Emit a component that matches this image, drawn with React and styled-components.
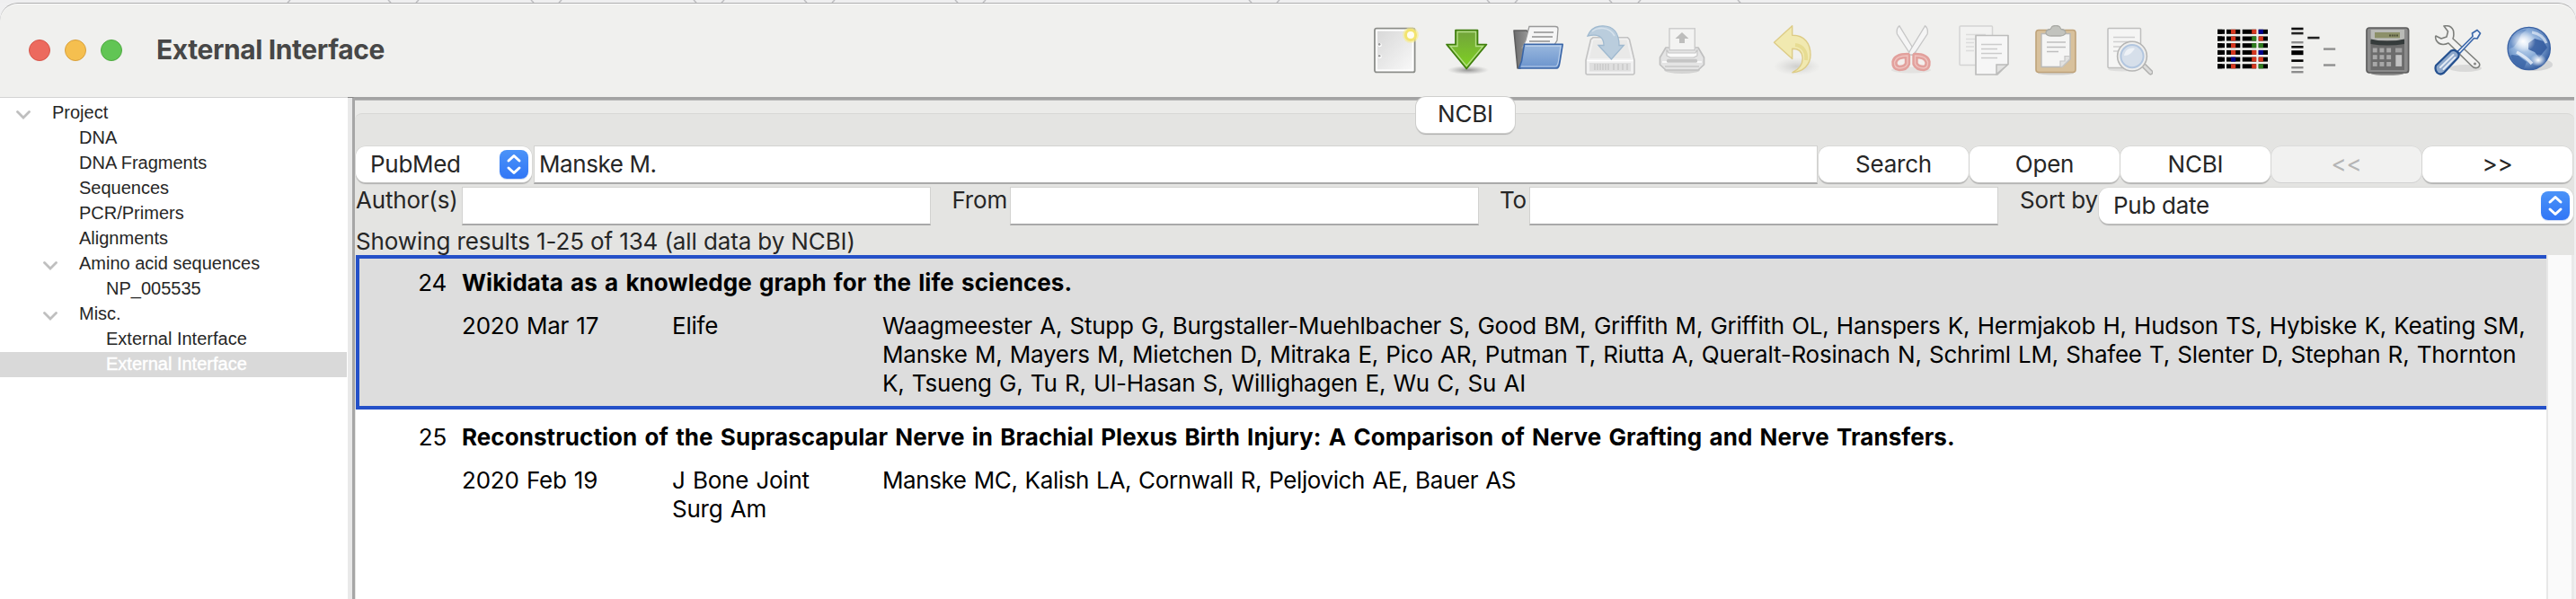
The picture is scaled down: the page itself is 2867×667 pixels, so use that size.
import React from 'react';
import styled, { createGlobalStyle, css } from 'styled-components';

const Global = createGlobalStyle`
  body { margin: 0; background: #f0f0f1; overflow: hidden; }
  * { box-sizing: border-box; }
  #root { font-family: Inter, "Liberation Sans", sans-serif; font-size: 26px; color: #262626; }
`;

/* ---------- window frame ---------- */

const Window = styled.div`
  display: flex;
  flex-direction: column;
  width: 2867px;
  height: 667px;
`;

const Backdrop = styled.svg`
  display: block;
  flex: none;
  width: 2867px;
  height: 3px;
  background: #efeff0;
`;

const TitleBar = styled.header`
  display: flex;
  align-items: center;
  flex: none;
  height: 105px;
  padding: 0 23px 0 32px;
  background: #f0f0ee;
  border-top: 1px solid #adadad;
  border-radius: 20px 20px 0 0;
  box-shadow: inset 0 1px 0 #fafafa;
`;

const Lights = styled.div`
  display: flex;
  gap: 16px;
`;

const Light = styled.span`
  width: 24px;
  height: 24px;
  border-radius: 50%;
  background: ${(p) => p.$fill};
  border: 1px solid ${(p) => p.$rim};
`;

const Title = styled.h1`
  margin: 0 auto 2px 38px;
  font-size: 30px;
  font-weight: 700;
  letter-spacing: -0.4px;
  color: #474747;
`;

const Toolbar = styled.div`
  display: flex;
  gap: 24px;
`;

const Spacer = styled.span`
  width: ${(p) => p.$w}px;
`;

const Icon = styled.svg`
  display: block;
  width: 56px;
  height: 56px;
`;

const Body = styled.div`
  display: flex;
  flex: 1;
  min-height: 0;
`;

/* ---------- project tree ---------- */

const Sidebar = styled.nav`
  flex: none;
  width: 387px;
  padding-top: 3px;
  background: #fff;
  border-top: 1px solid #d4d4d4;
  font-family: "Liberation Sans", Arial, sans-serif;
  font-size: 20px;
`;

const TreeRow = styled.div`
  display: flex;
  align-items: center;
  width: 386px;
  height: 28px;
  padding: 0 0 1px ${(p) => 18 + p.$level * 30}px;
  color: #262626;
  ${(p) => p.$selected && css`
    background: #d9d9d9;
    color: #fff;
    -webkit-text-stroke: 0.4px #fff;
  `}
`;

const Twisty = styled.svg`
  width: 16px;
  height: 10px;
  margin: 5px 24px 0 0;
  visibility: ${(p) => (p.$shown ? 'visible' : 'hidden')};
`;

const Splitter = styled.div`
  flex: none;
  width: 8px;
  background: #e9e9e9;
  border-right: 3px solid #a6a6a6;
  border-top: 1px solid #858585;
`;

/* ---------- main panel ---------- */

const Panel = styled.main`
  display: flex;
  flex-direction: column;
  flex: 1;
  background: #ebebe9;
  border-top: 3px solid #a3a3a3;
  box-shadow: inset 0 1px 0 #b8b8b8;
  margin-right: 2px;
`;

const TabBar = styled.div`
  display: flex;
  justify-content: center;
  flex: none;
  height: 15px;
`;

const Tab = styled.button`
  position: relative;
  z-index: 1;
  flex: none;
  width: 110px;
  height: 40px;
  margin: -3px 0 0 2px;
  padding: 0 0 3px;
  border: 0;
  border-radius: 11px;
  background: #fff;
  font: inherit;
  letter-spacing: -0.2px;
  color: #262626;
  box-shadow: 0 0 0 1px #cfcfcd, 0 2px 1px #b0b0b0;
`;

const Group = styled.section`
  display: flex;
  flex-direction: column;
  flex: 1;
  min-height: 0;
  padding-top: 35px;
  border-top: 1px solid #d8d8d6;
  border-radius: 8px 8px 0 0;
  background: #e4e4e2;
  letter-spacing: -0.2px;
`;

const SearchRow = styled.div`
  display: flex;
  align-items: flex-start;
  height: 46px;
  padding: 0 1px;
`;

const FilterRow = styled.div`
  display: flex;
  align-items: flex-start;
  height: 44px;
  padding: 0 1px 0 1px;
`;

const Select = styled.div`
  display: flex;
  align-items: center;
  justify-content: space-between;
  width: ${(p) => p.$w}px;
  height: 40px;
  margin-top: 1px;
  padding: 0 4px 0 16px;
  border-radius: 11px;
  background: #fff;
  box-shadow: 0 0 0 0.5px #d0d0ce, 0 1.5px 1px #b0b0b0;
  letter-spacing: -0.3px;
`;

const SelectText = styled.span`
  padding-bottom: 2px;
`;

const Stepper = styled.svg`
  display: block;
  width: 32px;
  height: 32px;
  border-radius: 8px;
  background: linear-gradient(#4b93f8, #3176f6);
  box-shadow: 0 1px 1px rgba(40, 90, 200, 0.25);
`;

const Field = styled.div`
  display: flex;
  align-items: center;
  width: ${(p) => p.$w}px;
  height: 43px;
  padding: 0 0 1px 5px;
  background: #fff;
  border: 1px solid #d2d2d0;
  border-bottom: 2px solid #a9a9a9;
  letter-spacing: -0.4px;
  ${(p) => p.$ml && css`margin-left: ${p.$ml}px;`}
`;

const Button = styled.button`
  width: 167px;
  height: 40px;
  margin: 1px 1px 0 0;
  padding: 0 0 2px;
  border: 0;
  border-radius: 11px;
  background: ${(p) => (p.disabled ? '#f1f1f0' : '#fff')};
  color: ${(p) => (p.disabled ? '#b5b5b5' : '#262626')};
  font: inherit;
  letter-spacing: inherit;
  box-shadow: ${(p) => (p.disabled ? '0 0 0 0.5px #d4d4d4, 0 1px 0 #cfcfcf' : '0 0 0 0.5px #d0d0ce, 0 1.5px 1px #b0b0b0')};
`;

const Label = styled.span`
  width: ${(p) => p.$w}px;
  height: 30px;
  line-height: 30px;
  padding-right: 1px;
  white-space: nowrap;
  text-align: ${(p) => (p.$right ? 'right' : 'left')};
`;

const Status = styled.div`
  flex: none;
  height: 32px;
  padding: 1px 0 0 1px;
  line-height: 32px;
  letter-spacing: -0.12px;
`;

/* ---------- results ---------- */

const ResultArea = styled.div`
  display: flex;
  flex: 1;
  min-height: 0;
  padding-left: 1px;
`;

const ResultList = styled.div`
  flex: 1;
  background: #fff;
  color: #000;
  line-height: 32px;
`;

const Result = styled.article`
  display: grid;
  grid-template-columns: 97px 234px 234px 1fr;
  grid-template-rows: 32px auto;
  row-gap: 16px;
  align-content: start;
  height: 172px;
  padding-top: 11px;
  border: 4px solid ${(p) => (p.$selected ? '#2450c8' : 'transparent')};
  border-right: 0;
  background: ${(p) => (p.$selected ? '#dddddd' : '#fff')};
`;

const Num = styled.span`
  text-align: right;
`;

const Head = styled.h2`
  grid-column: 2 / -1;
  margin: 0;
  padding-left: 17px;
  font-size: 26px;
  font-weight: 700;
  letter-spacing: 0.06px;
  word-spacing: 2px;
  white-space: nowrap;
`;

const Cell = styled.div`
  padding-left: 17px;
  letter-spacing: ${(p) => (p.$tight ? '-0.4px' : '-0.23px')};
  word-spacing: 1.2px;
  white-space: pre;
  ${(p) => p.$first && css`grid-column: 2;`}
`;

const ScrollTrack = styled.div`
  flex: none;
  width: 31px;
  background: #fafafa;
  border-left: 2px solid #e8e8e8;
  border-right: 3px solid #e9e9e9;
`;

/* ---------- toolbar icons ---------- */

const NewIcon = () => (
  <Icon viewBox="0 0 56 56">
    <defs><linearGradient id="pg" x1="0" y1="0" x2="1" y2="1"><stop offset="0" stopColor="#d8d8d8" /><stop offset="1" stopColor="#f8f8f8" /></linearGradient></defs>
    <rect x="6" y="3.6" width="44.6" height="48.8" rx="2" fill="#fff" stroke="#8b8d89" strokeWidth="1.8" />
    <rect x="9" y="6.6" width="38.6" height="42.8" fill="url(#pg)" />
    <circle cx="11.6" cy="22" r="2.2" fill="#fff" /><circle cx="11.2" cy="21.4" r="1.3" fill="#9a9a9a" />
    <circle cx="11.6" cy="34.8" r="2.2" fill="#fff" /><circle cx="11.2" cy="34.2" r="1.3" fill="#9a9a9a" />
    <circle cx="46" cy="11" r="8.8" fill="#f6ec8d" opacity=".6" />
    <circle cx="46" cy="11" r="5.5" fill="#fffdf0" stroke="#f3e46f" strokeWidth="3" />
  </Icon>
);

const ImportIcon = () => (
  <Icon viewBox="0 0 56 56">
    <defs>
      <linearGradient id="ga" x1="0" y1="0" x2="0" y2="1"><stop offset="0" stopColor="#72a23c" /><stop offset="1" stopColor="#7fd321" /></linearGradient>
      <radialGradient id="gs"><stop offset="0" stopColor="#555" stopOpacity=".6" /><stop offset="1" stopColor="#777" stopOpacity="0" /></radialGradient>
    </defs>
    <ellipse cx="30" cy="50" rx="23" ry="5" fill="url(#gs)" />
    <path d="M16 5.5H40.5V21.5H50.5L28.2 48.5L6 21.5H16Z" fill="url(#ga)" stroke="#3f7d0e" strokeWidth="1.7" strokeLinejoin="round" />
    <path d="M18 7.5H38.5V23.5H46.5L28.2 45.5L10 23.5H18Z" fill="none" stroke="#b4dd86" strokeWidth="1.3" />
  </Icon>
);

const OpenIcon = () => (
  <Icon viewBox="0 0 56 56">
    <defs>
      <linearGradient id="fb" x1="0" y1="0" x2="0" y2="1"><stop offset="0" stopColor="#9ab8de" /><stop offset="1" stopColor="#6b94cd" /></linearGradient>
      <linearGradient id="fg" x1="0" y1="0" x2="1" y2="0"><stop offset="0" stopColor="#6c6c6c" /><stop offset="1" stopColor="#bbb" /></linearGradient>
    </defs>
    <path d="M1 6H15L18 9H30V30L8 48H5Z" fill="url(#fg)" stroke="#5d5d5d" strokeWidth="1.6" strokeLinejoin="round" />
    <path d="M18 1.5H47Q50 1.5 50 4L49 17L44 25H10L14 17Z" fill="#f5f5f5" stroke="#999" strokeWidth="1.3" />
    <path d="M23 8H45M21 13H44M18 18H41" stroke="#a9a9a9" strokeWidth="2" />
    <path d="M12.5 21.3H55.2L52 41Q51 48 48.5 48H6.5L9.5 40Z" fill="url(#fb)" stroke="#3a66a8" strokeWidth="1.6" strokeLinejoin="round" />
    <path d="M14 23.4H53L50.5 40Q49.5 46 47 46H9" fill="none" stroke="#b9cee9" strokeWidth="1.2" />
  </Icon>
);

const SaveIcon = () => (
  <Icon viewBox="0 0 56 56">
    <path d="M9 13.8H47.5L49.5 16L55 39V53Q55 55 53 55H3Q1 55 1 53V39L6.5 16Z" fill="#f1f1f1" stroke="#c2c2c2" strokeWidth="1.6" />
    <path d="M9.5 16.5H46.5L51 37H5Z" fill="#e9e9e8" />
    <path d="M2.5 39.5H53.5" stroke="#fff" strokeWidth="1.6" />
    <rect x="5" y="42" width="46" height="9.5" fill="#dfdfdf" />
    <path d="M11 43V50M14 43V50M17 43V50M20 43V50M23 43V50M26 43V50M32 43V50M37 43V50M42 43V50M47 43V50" stroke="#c7c7c7" strokeWidth="1.3" />
    <path d="M3 12C6 4 12 .8 20 .8C32 .8 38 9 38 22.5H43.3L29.4 38L15 22.5H21C21 14 16 9 3 12Z" fill="#bacddd" stroke="#9fb9cf" strokeWidth="1.3" />
    <path d="M8 7C14 2 27 1 33 12" fill="none" stroke="#d6e2ec" strokeWidth="1.6" />
  </Icon>
);

const PrintIcon = () => (
  <Icon viewBox="0 0 56 56">
    <ellipse cx="28" cy="50" rx="20" ry="4" fill="#d4d4d3" />
    <path d="M10 25H46L52.5 36V44L46 50H10L3.5 44V36Z" fill="#e4e4e4" stroke="#c0c0c0" strokeWidth="1.7" strokeLinejoin="round" />
    <rect x="14" y="3.8" width="28.3" height="24" fill="#f3f3f2" stroke="#cbcbcb" strokeWidth="1.4" />
    <path d="M28 8L35.5 15H31V20H25V15H20.5Z" fill="#bdbdbc" />
    <path d="M13 31H43L45 27V34L41 36H15L11 34V27Z" fill="#fafafa" stroke="#c6c6c6" strokeWidth="1.2" />
    <path d="M6 41H50" stroke="#f8f8f8" strokeWidth="2" />
    <rect x="11" y="37.8" width="34" height="4" rx="1.5" fill="#c5c5c5" />
    <path d="M9 46H47" stroke="#c9c9c9" strokeWidth="1.4" />
  </Icon>
);

const UndoIcon = () => (
  <Icon viewBox="0 0 56 56">
    <defs><radialGradient id="us"><stop offset="0" stopColor="#777" stopOpacity=".28" /><stop offset="1" stopColor="#999" stopOpacity="0" /></radialGradient></defs>
    <ellipse cx="28" cy="46" rx="26" ry="10" fill="url(#us)" />
    <path d="M2.5 19.3L22.7 .8V11.3C36 11 43 20 43 33C43 44 35 52 23 52.7C32 48 35 42 34 35C33 28 29 26 22.7 26.2V37.5Z" fill="#f1e9b0" stroke="#ddcc86" strokeWidth="1.4" strokeLinejoin="round" />
    <path d="M26 22C35 23 39 30 38 39" fill="none" stroke="#e7dc92" strokeWidth="4" />
  </Icon>
);

const CutIcon = () => (
  <Icon viewBox="0 0 56 56">
    <ellipse cx="27" cy="50" rx="22" ry="3.5" fill="#e3e2e0" />
    <path d="M14 .8L30.5 28L33 33L27.5 33L24 29L11.5 10Q10 4 14 .8Z" fill="#f5f5f5" stroke="#c6c6c6" strokeWidth="1.3" />
    <path d="M42.5 .8L26 28L23.5 33L29 33L32.5 29L45 10Q46.5 4 42.5 .8Z" fill="#f5f5f5" stroke="#c6c6c6" strokeWidth="1.3" />
    <path d="M23 34V43Q21 48 14 48Q8 47.5 8.5 41Q10 34 23 34Z" fill="#f3eeec" stroke="#e2a09c" strokeWidth="6.4" strokeLinejoin="round" />
    <path d="M31.5 34V43Q34 48 41 48Q46 47.5 45.500 41Q44 34 31.5 34Z" fill="#f3eeec" stroke="#e2a09c" strokeWidth="6.4" strokeLinejoin="round" />
    <path d="M23 34V43Q21 48 14 48Q8 47.5 8.5 41Q10 34 23 34ZM31.5 34V43Q34 48 41 48Q46 47.5 45.5 41Q44 34 31.5 34Z" fill="none" stroke="#efc3bf" strokeWidth="1.4" />
  </Icon>
);

const CopyIcon = () => (
  <Icon viewBox="0 0 56 56">
    <rect x="1" y="1" width="36.5" height="43.5" rx="1" fill="#f2f2f1" stroke="#d4d4d3" strokeWidth="1.5" />
    <path d="M8 10.5H30M8 15.5H28M8 19.5H17M8 24H17M8 28.5H17" stroke="#dcdcdc" strokeWidth="1.3" />
    <path d="M19 11.5H55V43L43 55H19Z" fill="#f6f6f6" stroke="#bcbcbb" strokeWidth="1.7" strokeLinejoin="round" />
    <path d="M42 54.5V44H54.5Z" fill="#e2e2e1" stroke="#bcbcbb" strokeWidth="1.5" />
    <path d="M25 21.5H48M25 26.5H43M25 31.5H48M25 36.5H43" stroke="#cbcbcb" strokeWidth="1.5" />
  </Icon>
);

const PasteIcon = () => (
  <Icon viewBox="0 0 56 56">
    <ellipse cx="28" cy="53.5" rx="20" ry="2" fill="#d2d1cf" />
    <rect x="6" y="5.5" width="44" height="47" rx="3" fill="#d8c19c" stroke="#bfa37a" strokeWidth="1.6" />
    <path d="M12 9.5H44V38L35 46.5H12Z" fill="#f5f5f4" stroke="#b9b9b7" strokeWidth="1.4" />
    <path d="M33 46V40H38V34.5H43.5V38L35 46.5Z" fill="#e2e2e1" stroke="#c6c6c5" strokeWidth="1.2" />
    <path d="M18 19H39M18 24.5H39M18 29.5H31" stroke="#bebebe" strokeWidth="1.5" />
    <path d="M17 9Q17 5 22 4.5L24 1.5Q28 -.5 32 1.5L34 4.5Q39 5 39 9Q37 12 33 12H23Q18 12 17 9Z" fill="#c2c3be" stroke="#aaaba6" strokeWidth="1.3" />
  </Icon>
);

const FindIcon = () => (
  <Icon viewBox="0 0 56 56">
    <ellipse cx="22" cy="49" rx="16" ry="2.5" fill="#dededd" />
    <rect x="6" y="3.6" width="36.5" height="44" rx="1" fill="#f5f5f4" stroke="#bfbfbe" strokeWidth="1.5" />
    <path d="M12 13.5H36M12 18.5H32M12 24H22M12 29H18" stroke="#d0d0d0" strokeWidth="1.4" />
    <path d="M45 44L53.5 52.5" stroke="#b0b0af" strokeWidth="6" strokeLinecap="round" />
    <path d="M45 44L53.5 52.5" stroke="#dcdcdb" strokeWidth="3" strokeLinecap="round" />
    <circle cx="33" cy="34.6" r="16.4" fill="#eeeeed" stroke="#b5b5b4" strokeWidth="1.6" />
    <circle cx="33" cy="34.6" r="12.6" fill="#d6dfea" stroke="#b2c6df" strokeWidth="2" />
    <path d="M24 34C25 27 31 24.5 36 26C33 31 29 34 24 34Z" fill="#eef2f7" />
  </Icon>
);

const PALETTE = { k: '#000', r: '#d5371f', g: '#2f7d1f', b: '#00008a' };
const GRID_COLS = [
  { x: 0, w: 8, mark: 0, codes: 'kkkkkk' },
  { x: 10, w: 15.3, mark: 15, codes: 'rrrrbr' },
  { x: 27.7, w: 15.3, mark: 38.2, codes: 'rggrrr' },
  { x: 45.7, w: 10.3, mark: 45.7, codes: 'brgbrg' },
];

const GridIcon = () => (
  <Icon viewBox="0 0 56 56">
    {[0, 1, 2, 3, 4, 5].map((row) => GRID_COLS.map((col) => (
      <g key={`${row}-${col.x}`}>
        <rect x={col.x} y={4.8 + row * 7.7} width={col.w} height="5" fill="#000" />
        <rect x={col.mark} y={4.8 + row * 7.7} width="5.2" height="5" fill={PALETTE[col.codes[row]]} />
      </g>
    )))}
  </Icon>
);

const BANDS = [
  [2.3, 2.7, 2.6, '#111'], [2.3, 7.8, 2.6, '#222'], [2.3, 18, 2.4, '#8c8c8c'],
  [2.3, 23, 2.6, '#111'], [2.3, 28.2, 5, '#000'], [2.3, 38.3, 2.6, '#000'],
  [2.3, 46, 2.4, '#8c8c8c'], [2.3, 51, 2.4, '#8c8c8c'], [20.3, 12.8, 2.6, '#222'],
  [38, 25.4, 2.4, '#8f8f8f'], [38, 43.3, 2.4, '#8f8f8f'],
];

const GelIcon = () => (
  <Icon viewBox="0 0 56 56">
    {BANDS.map(([x, y, h, fill]) => <rect key={`${x}-${y}`} x={x} y={y} width="13.2" height={h} fill={fill} />)}
  </Icon>
);

const CalcIcon = () => (
  <Icon viewBox="0 0 56 56">
    <ellipse cx="29" cy="54" rx="18" ry="2" fill="#8f8f8e" />
    <rect x="6" y="3" width="46.6" height="50" rx="3" fill="#8b8b8b" stroke="#5c5c5c" strokeWidth="1.7" />
    <rect x="10.5" y="5" width="37.5" height="45" fill="#6c6c6c" />
    <rect x="10.5" y="5" width="37.5" height="12" fill="#b9bab6" />
    <rect x="15" y="8" width="28" height="6.3" fill="#8c9068" />
    <path d="M31 11.5H41" stroke="#50533b" strokeWidth="2" strokeDasharray="2 .7" />
    <path d="M10.5 15.5Q29 20 48 15.5V21Q29 24 10.5 21Z" fill="#353b3b" />
    {[25.5, 33.2, 41].map((y) => [12.8, 20.5, 28.2].map((x) => (
      <rect key={`${x}-${y}`} x={x} y={y} width="4.9" height="4.9" fill="#a8a8a8" />
    )))}
    <rect x="38" y="25.5" width="7.3" height="4.9" fill="#a0a0a0" />
    <rect x="38.3" y="33.2" width="6.8" height="12.7" fill="#c2c2c2" />
  </Icon>
);

const ToolsIcon = () => (
  <Icon viewBox="0 0 56 56">
    <ellipse cx="36" cy="48" rx="18" ry="4" fill="#d9d9d8" />
    <path d="M12 1Q20 -.5 22.5 6Q23.5 12 22 15L49 40Q54 44 50 47Q46 49 42.5 45L17 20Q8 24 3.5 17Q2 13 3 12L9 15L15 13L16.5 7Z" fill="#f2f2f1" stroke="#7d7f7b" strokeWidth="1.6" strokeLinejoin="round" />
    <circle cx="46.5" cy="43" r="1.6" fill="#8a8a88" />
    <path d="M27 29.5L44 12.5L43.5 9L49 5.5L52.5 9L49 15L45.5 14.5L29.5 31.5Z" fill="#eef2f8" stroke="#3b68ab" strokeWidth="1.7" strokeLinejoin="round" />
    <path d="M20 28.5Q25 26.5 28.5 32Q29 36 27 37L12 53Q8 56 4.5 53Q1.5 50 3 45Z" fill="#8fa9cb" stroke="#24508f" strokeWidth="2.2" strokeLinejoin="round" />
    <path d="M8 47L22.5 33M11.5 49L24.5 36" stroke="#e3eaf4" strokeWidth="2" strokeLinecap="round" />
  </Icon>
);

const GlobeIcon = () => (
  <Icon viewBox="0 0 56 56">
    <defs>
      <radialGradient id="gl" cx=".42" cy=".4" r=".65"><stop offset="0" stopColor="#cfe0f3" /><stop offset=".55" stopColor="#83a7d5" /><stop offset="1" stopColor="#31599c" /></radialGradient>
      <radialGradient id="gh"><stop offset="0" stopColor="#fff" /><stop offset="1" stopColor="#fff" stopOpacity="0" /></radialGradient>
    </defs>
    <ellipse cx="32" cy="44" rx="21" ry="7" fill="#d4d5d6" />
    <circle cx="26.7" cy="26" r="23.6" fill="url(#gl)" stroke="#3a62a4" strokeWidth="1.4" />
    <path d="M5 18C9 9 17 4 24 5L18 10L15 17L10 24L4 27Z" fill="#5f88c2" opacity=".7" />
    <path d="M26 20L33 15L43 18L47 25L42 31L38 36L33 30L26 27Z" fill="#31599d" opacity=".85" />
    <path d="M8 33L15 34L24 41L21 48C13 46 8 40 6 34Z" fill="#3c66a8" opacity=".85" />
    <ellipse cx="20" cy="18" rx="14" ry="12" fill="url(#gh)" />
    <ellipse cx="37" cy="39" rx="9" ry="7" fill="url(#gh)" />
    <path d="M13 30Q24 36 30 43" fill="none" stroke="#edf3fa" strokeWidth="3.5" opacity=".8" />
    <path d="M30 8Q42 10 46 20" fill="none" stroke="#e2ebf6" strokeWidth="3" opacity=".7" />
  </Icon>
);

/* ---------- data ---------- */

const TREE = [
  { label: 'Project', level: 0, open: true },
  { label: 'DNA', level: 1 },
  { label: 'DNA Fragments', level: 1 },
  { label: 'Sequences', level: 1 },
  { label: 'PCR/Primers', level: 1 },
  { label: 'Alignments', level: 1 },
  { label: 'Amino acid sequences', level: 1, open: true },
  { label: 'NP_005535', level: 2 },
  { label: 'Misc.', level: 1, open: true },
  { label: 'External Interface', level: 2 },
  { label: 'External Interface', level: 2, selected: true },
];

const RESULTS = [
  {
    num: 24,
    title: 'Wikidata as a knowledge graph for the life sciences.',
    date: '2020 Mar 17',
    journal: 'Elife',
    authors:
      'Waagmeester A, Stupp G, Burgstaller-Muehlbacher S, Good BM, Griffith M, Griffith OL, Hanspers K, Hermjakob H, Hudson TS, Hybiske K, Keating SM,\n' +
      'Manske M, Mayers M, Mietchen D, Mitraka E, Pico AR, Putman T, Riutta A, Queralt-Rosinach N, Schriml LM, Shafee T, Slenter D, Stephan R, Thornton\n' +
      'K, Tsueng G, Tu R, Ul-Hasan S, Willighagen E, Wu C, Su AI',
    selected: true,
  },
  {
    num: 25,
    title: 'Reconstruction of the Suprascapular Nerve in Brachial Plexus Birth Injury: A Comparison of Nerve Grafting and Nerve Transfers.',
    date: '2020 Feb 19',
    journal: 'J Bone Joint\nSurg Am',
    authors: 'Manske MC, Kalish LA, Cornwall R, Peljovich AE, Bauer AS',
    tight: true,
  },
];

const TAB_FALLING = [433, 592, 773, 896, 1064, 1391, 1656, 1792, 1935];
const TAB_RISING = [320, 463, 622, 803, 926, 1094, 1421, 1686, 1823];

const SelectBox = ({ width, children }) => (
  <Select $w={width}>
    <SelectText>{children}</SelectText>
    <Stepper viewBox="0 0 32 32">
      <path d="M10 12L16 6.5L22 12M10 20L16 25.5L22 20" fill="none" stroke="#fff" strokeWidth="3" strokeLinecap="round" strokeLinejoin="round" />
    </Stepper>
  </Select>
);

export default function App() {
  return (
    <Window>
      <Global />
      <Backdrop viewBox="0 0 2867 3">
        <g stroke="#bdbdc0" strokeWidth="1.5">
          {TAB_FALLING.map((x) => <path key={x} d={`M${x - 1} 0L${x + 2} 3`} />)}
          {TAB_RISING.map((x) => <path key={x} d={`M${x + 3} 0L${x} 3`} />)}
        </g>
      </Backdrop>
      <TitleBar>
        <Lights>
          <Light $fill="#ec6a5e" $rim="#d65549" />
          <Light $fill="#f5bf4f" $rim="#d8a03c" />
          <Light $fill="#61c554" $rim="#4faa41" />
        </Lights>
        <Title>External Interface</Title>
        <Toolbar>
          <NewIcon /><ImportIcon /><OpenIcon /><SaveIcon /><PrintIcon />
          <Spacer $w={24} />
          <UndoIcon />
          <Spacer $w={24} />
          <CutIcon /><CopyIcon /><PasteIcon /><FindIcon />
          <Spacer $w={24} />
          <GridIcon /><GelIcon /><CalcIcon /><ToolsIcon /><GlobeIcon />
        </Toolbar>
      </TitleBar>
      <Body>
        <Sidebar>
          {TREE.map((node, i) => (
            <TreeRow key={i} $level={node.level} $selected={node.selected}>
              <Twisty $shown={node.open} viewBox="0 0 16 10">
                <path d="M1.5 1.5L8 8L14.5 1.5" fill="none" stroke="#bfbfbf" strokeWidth="2.8" strokeLinecap="round" />
              </Twisty>
              {node.label}
            </TreeRow>
          ))}
        </Sidebar>
        <Splitter />
        <Panel>
          <TabBar><Tab>NCBI</Tab></TabBar>
          <Group>
            <SearchRow>
              <SelectBox width={196}>PubMed</SelectBox>
              <Field $w={1429} $ml={2}>Manske M.</Field>
              <Spacer $w={1} />
              <Button>Search</Button>
              <Button>Open</Button>
              <Button>NCBI</Button>
              <Button disabled>&lt;&lt;</Button>
              <Button>&gt;&gt;</Button>
            </SearchRow>
            <FilterRow>
              <Label $w={118}>Author(s)</Label>
              <Field $w={522} />
              <Label $w={86} $right>From</Label>
              <Field $w={522} $ml={2} />
              <Label $w={54} $right>To</Label>
              <Field $w={522} $ml={2} />
              <Label $w={112} $right>Sort by</Label>
              <SelectBox width={528}>Pub date</SelectBox>
            </FilterRow>
            <Status>Showing results 1-25 of 134 (all data by NCBI)</Status>
            <ResultArea>
              <ResultList>
                {RESULTS.map((r) => (
                  <Result key={r.num} $selected={r.selected}>
                    <Num>{r.num}</Num>
                    <Head>{r.title}</Head>
                    <Cell $first>{r.date}</Cell>
                    <Cell>{r.journal}</Cell>
                    <Cell $tight={r.tight}>{r.authors}</Cell>
                  </Result>
                ))}
              </ResultList>
              <ScrollTrack />
            </ResultArea>
          </Group>
        </Panel>
      </Body>
    </Window>
  );
}
